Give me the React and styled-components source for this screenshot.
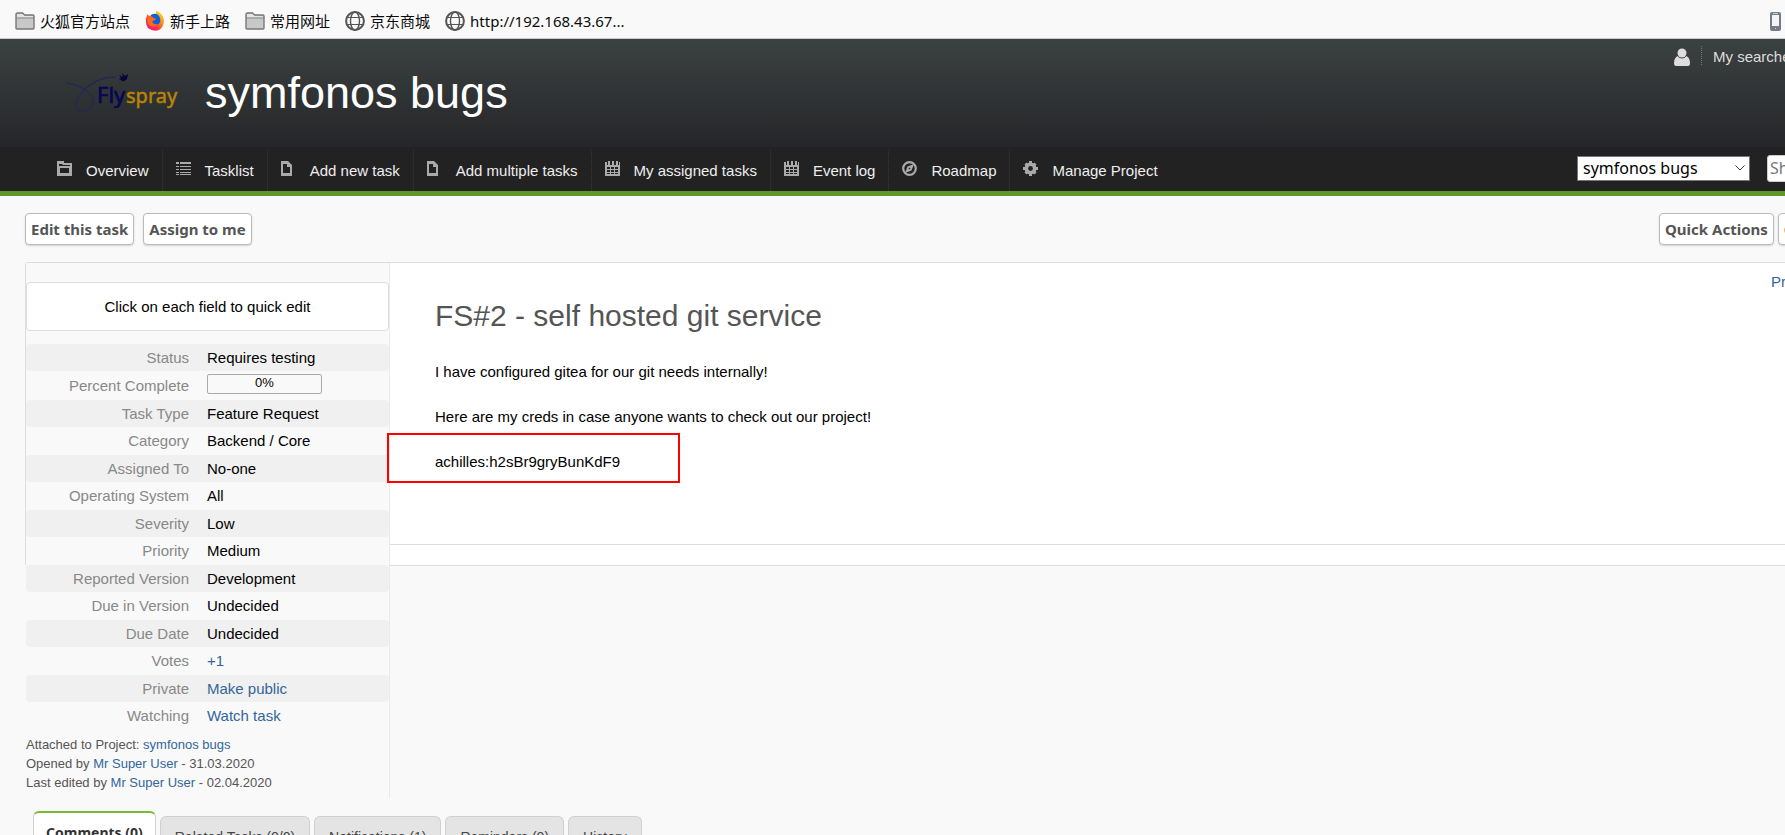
import React from "react";
import styled, { createGlobalStyle, css } from "styled-components";

const sans = `"Liberation Sans", Arial, sans-serif`;
const humanist = `"Noto Sans", "Noto Sans CJK SC", sans-serif`;

const GlobalStyle = createGlobalStyle`
  *, *::before, *::after { box-sizing: border-box; }
  html, body { margin: 0; background: #f9f9f9; overflow: hidden; }
  body { font: 15px/18px ${sans}; color: #000; }
  a { color: #369; text-decoration: none; }
`;

const Page = styled.div`
  height: 100vh;
  overflow: hidden;
`;

/* bookmarks */
const BookmarkBar = styled.nav`
  display: flex;
  align-items: center;
  gap: 15px;
  height: 39px;
  padding: 4px 4px 0 15px;
  background: #f9f9f9;
  border-bottom: 1px solid #ccc;
`;
const Bookmark = styled.a`
  display: flex;
  align-items: center;
  gap: 5px;
  color: #0c0c0d;
  font: 15px/20px ${humanist};
  white-space: nowrap;
`;
const DeviceButton = styled.button`
  display: flex;
  margin-left: auto;
  padding: 0;
  border: 0;
  background: none;
`;

/* header */
const Header = styled.header`
  display: flex;
  align-items: flex-start;
  height: 108px;
  padding-left: 64px;
  background: linear-gradient(#3c4141, #252629);
`;
const Brand = styled.a`
  display: flex;
  align-items: center;
  gap: 25px;
  padding-top: 28px;
`;
const SiteTitle = styled.h1`
  margin: 0;
  color: #fff;
  font: 45px/52px ${sans};
`;
const UserMenu = styled.div`
  display: flex;
  flex: none;
  width: 111px;
  margin-left: auto;
  padding-top: 7px;
  white-space: nowrap;
`;
const UserLink = styled.a`
  flex: none;
  height: 19px;
  line-height: 22px;
  color: #ddd;
  svg { display: block; margin-top: 2px; }
  ${(p) =>
    p.$divided &&
    css`
      margin-left: 11px;
      padding-left: 11px;
      border-left: 1px dotted #777;
    `}
`;

/* main menu */
const MenuBar = styled.nav`
  display: flex;
  height: 49px;
  padding-left: 44px;
  background: #222;
  border-bottom: 5px solid #5f9729;
`;
const MenuItem = styled.a`
  display: flex;
  gap: 14px;
  height: 41px;
  margin-top: 3px;
  padding: 11px 13px 0;
  border-right: 1px dotted #383838;
  color: #eee;
  line-height: 20px;
  white-space: nowrap;
  &:last-of-type { border-right: 0; }
`;
const MenuTools = styled.div`
  display: flex;
  flex: none;
  align-items: center;
  gap: 17px;
  width: 208px;
  margin-left: auto;
  padding-bottom: 2px;
`;
const SelectWrap = styled.div`
  display: grid;
  flex: none;
  width: 173px;
  align-items: center;
  & > * { grid-area: 1 / 1; }
  svg { justify-self: end; margin-right: 5px; pointer-events: none; }
`;
const ProjectSelect = styled.select`
  appearance: none;
  height: 25px;
  padding: 0 20px 0 5px;
  border: 1px solid #777;
  border-radius: 0;
  background: #fff;
  color: #000;
  font: 16px/20px ${humanist};
`;
const TaskInput = styled.input`
  flex: none;
  width: 90px;
  height: 27px;
  padding: 2px;
  border: 1px solid #ccc;
  border-radius: 3px;
  font: 16px/20px ${humanist};
  &::placeholder { color: #777; opacity: 1; }
`;

/* task actions */
const Content = styled.main`
  padding-left: 25px;
`;
const ActionBar = styled.div`
  display: flex;
  gap: 9px;
  padding: 17px 0;
`;
const ActionGroup = styled.div`
  display: flex;
  flex: none;
  gap: 4px;
  width: 126px;
  margin-left: auto;
`;
const ActionButton = styled.button`
  flex: none;
  height: 32px;
  padding: 0 5px;
  border: 1px solid #bbb;
  border-radius: 4px;
  background: #fff;
  box-shadow: 0 1px 2px rgba(0, 0, 0, 0.15);
  color: #555;
  font: bold 15px/20px ${humanist};
  white-space: nowrap;
`;

/* task panel */
const TaskPanel = styled.section`
  border: 1px solid #ddd;
  border-right: 0;
  border-radius: 3px 0 0 3px;
  background: #fff;
`;
const Sidebar = styled.aside`
  float: left;
  width: 364px;
  height: 535px;
  padding-top: 19px;
  border-right: 1px solid #eaeaea;
  background: #f9f9f9;
`;
const EditHint = styled.p`
  margin: 0 0 13px;
  padding: 15px 15px 14px;
  border: 1px solid #ddd;
  border-radius: 4px;
  background: #fff;
  text-align: center;
`;
const FieldTable = styled.table`
  width: 100%;
  border-spacing: 0;
`;
const FieldRow = styled.tr`
  height: 28px;
  &:nth-child(odd) { height: 27px; }
  &:nth-child(odd) > * { background: #f0f0f0; }
  th, td { padding: 0; }
  th {
    width: 181px;
    padding-right: 18px;
    border-radius: 4px 0 0 4px;
    color: #888;
    font-weight: normal;
    text-align: right;
  }
  td { border-radius: 0 4px 4px 0; }
`;
const ProgressBar = styled.div`
  width: 115px;
  height: 20px;
  margin: 3px 0 6px;
  border: 1px solid #aaa;
  border-radius: 2px;
  font-size: 13px;
  line-height: 16px;
  text-align: center;
`;
const TaskMeta = styled.div`
  padding-top: 5px;
  color: #555;
  font-size: 13px;
  line-height: 19px;
`;
const TaskBody = styled.article`
  margin-left: 364px;
  padding: 33px 45px 46px;
`;
const TaskTitle = styled.h2`
  margin: 0 0 27px;
  color: #555;
  font: 30px/40px ${sans};
`;
const Paragraph = styled.p`
  margin: 0 0 27px;
`;
const Marked = styled.span`
  position: relative;
  &::after {
    content: "";
    position: absolute;
    top: -20px;
    left: -48px;
    width: 293px;
    height: 50px;
    border: 2px solid #f00;
  }
`;
const TaskNav = styled.div`
  display: flex;
  width: 14px;
  float: right;
  padding-top: 10px;
  white-space: nowrap;
`;
const PanelFooter = styled.footer`
  height: 21px;
  margin-left: 364px;
  border-top: 1px solid #ddd;
`;

/* tabs */
const TabList = styled.div`
  clear: both;
  display: flex;
  align-items: flex-start;
  gap: 4px;
  padding: 13px 0 0 8px;
`;
const Tab = styled.button`
  height: 40px;
  margin-top: 5px;
  padding: 0 14px;
  border: 1px solid #d0d0d0;
  border-bottom: 0;
  border-radius: 6px 6px 0 0;
  background: #e4e4e4;
  color: #444;
  font: 14px/18px ${sans};
  ${(p) =>
    p.$active &&
    css`
      height: 45px;
      margin-top: 0;
      padding: 0 12px 4px;
      border-top: 2px solid #7b3;
      background: #fff;
      color: #333;
      font: bold 14px/20px ${humanist};
    `}
`;

/* icons */
const FolderIcon = () => (
  <svg width="20" height="18" viewBox="0 0 20 18">
    <path d="M1 16V2.500Q1 1 2.500 1h5l2 2H18q1 0 1 1v12q0 1-1 1H2q-1 0-1-1Z" fill="#c8c8c8" stroke="#777" strokeWidth="1.400" />
    <path d="M2 2h5.500l2 2H18v1.500H2Z" fill="#e4e4e4" />
    <path d="M1 6h18" stroke="#888" />
  </svg>
);
const GlobeIcon = () => (
  <svg width="20" height="20" viewBox="0 0 20 20" fill="none" stroke="#555">
    <circle cx="10" cy="10" r="8.900" strokeWidth="2" />
    <ellipse cx="10" cy="10" rx="4.500" ry="9" strokeWidth="1.400" />
    <path d="M2 6.500h16M2 13.500h16" strokeWidth="1.200" />
  </svg>
);
const FirefoxIcon = () => (
  <svg width="20" height="20" viewBox="0 0 20 20">
    <defs>
      <linearGradient id="fx" x1="1" y1="0" x2="0.200" y2="1">
        <stop offset="0" stopColor="#fff04a" />
        <stop offset=".4" stopColor="#ff980e" />
        <stop offset=".7" stopColor="#ff3647" />
        <stop offset="1" stopColor="#e31587" />
      </linearGradient>
    </defs>
    <path d="M2.500 3 4 5Q7 3 11 3V0Q18 2 19 9q0 7-5 10-6 2-11-2-4-6-.5-14Z" fill="url(#fx)" />
    <path d="M6 4q5-3 8 1 3 5-.5 8-4 3-7.500 0V9Z" fill="#0a60df" />
    <path d="M3 6q4-2 5.500 1l3 .8-2.500 1.700-2 1 1.500 2q2 1 4.500.5-3 4-8 2-4-4-2-9Z" fill="#ff6a16" />
  </svg>
);
const PhoneIcon = () => (
  <svg width="11" height="19" viewBox="0 0 11 19">
    <rect width="11" height="19" rx="2" fill="#737b85" />
    <path d="M2 3h7v11H2Z" fill="#f4f4f4" />
    <path d="M3 1.500h5M5 16.500h1" stroke="#ccd" />
  </svg>
);
const UserIcon = () => (
  <svg width="16" height="18" viewBox="0 0 16 18" fill="#ddd">
    <circle cx="8" cy="5" r="4.500" />
    <path d="M3.500 8q2 2.500 4.500 2.500T12.500 8Q16 10 16 15q0 3-2 3H2q-2 0-2-3 0-5 3.500-7Z" />
  </svg>
);
const ChevronIcon = () => (
  <svg width="10" height="6" viewBox="0 0 10 6" fill="none" stroke="#333">
    <path d="M.5.5 5 5 9.500.5" />
  </svg>
);
const Logo = () => (
  <svg width="116" height="50" viewBox="0 0 116 50" role="img" aria-label="Flyspray">
    <path
      d="M2 15C18 17 31 27 29 35C27 43 17 46 13 41C9 35 18 22 26 17C34 11 43 9 52 9"
      fill="none"
      stroke="#26284f"
      strokeWidth="1.500"
    />
    <path d="M55 7l4 2-1-4 3 3 3-2-1 5q-4 4-6 1l-2-1 2-1Z" fill="#04043e" />
    <text x="33" y="35" fontFamily="'Noto Sans', sans-serif" fontSize="22" fill="#060655" stroke="#060655" strokeWidth="0.600">Fly</text>
    <text x="62" y="35" fontFamily="'Noto Sans', sans-serif" fontSize="20" fill="#b98405" stroke="#b98405" strokeWidth="0.500">spray</text>
  </svg>
);
const menuShapes = {
  overview: <path d="M0 0h7v2h8v13H0Zm3 7v5h9V7Zm-1-3v1h11V4H6L5 3H2Z" fillRule="evenodd" />,
  list: <path d="M0 1h3v2H0Zm4 0h11v2H4ZM0 5h3v1H0Zm4 0h11v1H4ZM0 8h3v1H0Zm4 0h11v1H4ZM0 11h3v1H0Zm4 0h11v1H4ZM0 13h3v1H0Zm4 0h11v1H4Z" />,
  file: <path d="M0 0h7l4 4v11H0Zm2 3v9h7V6H6V3Z" fillRule="evenodd" />,
  calendar: (
    <path
      d="M0 1h2v3h1V0h2v4h2V0h2v4h2V0h2v4h1V1h1v14H0Zm2 5v2h3V6Zm4 0v2h3V6Zm4 0v2h3V6ZM2 9v2h3V9Zm4 0v2h3V9Zm4 0v2h3V9Zm-8 3v1h3v-1Zm4 0v1h3v-1Zm4 0v1h3v-1Z"
      fillRule="evenodd"
    />
  ),
  compass: (
    <g>
      <circle cx="7.500" cy="7.500" r="6.300" fill="none" stroke="#aaa" strokeWidth="2.200" />
      <path d="m12 3-2.500 6.500L3 12l2.500-6.500ZM7.500 6.500l-1 1 1 1 1-1Z" fillRule="evenodd" />
    </g>
  ),
  gear: (
    <g>
      <circle cx="7.500" cy="7.500" r="4.200" fill="none" stroke="#aaa" strokeWidth="3.600" />
      <path d="M7.500 0v15M0 7.500h15M2.500 2.500l10 10M12.500 2.500l-10 10" stroke="#aaa" strokeWidth="3" />
      <circle cx="7.500" cy="7.500" r="2.400" fill="#222" />
    </g>
  ),
};
const MenuIcon = ({ name }) => (
  <svg width="15" height="15" viewBox="0 0 15 15" fill="#aaa" aria-hidden="true">
    {menuShapes[name]}
  </svg>
);

const bookmarks = [
  [FolderIcon, "火狐官方站点"],
  [FirefoxIcon, "新手上路"],
  [FolderIcon, "常用网址"],
  [GlobeIcon, "京东商城"],
  [GlobeIcon, "http://192.168.43.67..."],
];
const menu = [
  ["overview", "Overview"],
  ["list", "Tasklist"],
  ["file", "Add new task"],
  ["file", "Add multiple tasks"],
  ["calendar", "My assigned tasks"],
  ["calendar", "Event log"],
  ["compass", "Roadmap"],
  ["gear", "Manage Project"],
];
const fields = [
  ["Status", "Requires testing"],
  ["Percent Complete", <ProgressBar role="progressbar" aria-label="Percent Complete" aria-valuenow={0}>0%</ProgressBar>],
  ["Task Type", "Feature Request"],
  ["Category", "Backend / Core"],
  ["Assigned To", "No-one"],
  ["Operating System", "All"],
  ["Severity", "Low"],
  ["Priority", "Medium"],
  ["Reported Version", "Development"],
  ["Due in Version", "Undecided"],
  ["Due Date", "Undecided"],
  ["Votes", <a href="#vote">+1</a>],
  ["Private", <a href="#public">Make public</a>],
  ["Watching", <a href="#watch">Watch task</a>],
];
const tabs = ["Comments (0)", "Related Tasks (0/0)", "Notifications (1)", "Reminders (0)", "History"];

export default function App() {
  return (
    <Page>
      <GlobalStyle />
      <BookmarkBar aria-label="Bookmarks">
        {bookmarks.map(([Icon, label]) => (
          <Bookmark href="#bookmark" key={label}>
            <Icon />
            {label}
          </Bookmark>
        ))}
        <DeviceButton aria-label="Mobile bookmarks">
          <PhoneIcon />
        </DeviceButton>
      </BookmarkBar>

      <Header>
        <Brand href="#home">
          <Logo />
          <SiteTitle>symfonos bugs</SiteTitle>
        </Brand>
        <UserMenu>
          <UserLink href="#profile" aria-label="Profile">
            <UserIcon />
          </UserLink>
          <UserLink href="#searches" $divided>My searches</UserLink>
        </UserMenu>
      </Header>

      <MenuBar aria-label="Project">
        {menu.map(([icon, label]) => (
          <MenuItem href="#menu" key={label}>
            <MenuIcon name={icon} />
            <span>{label}</span>
          </MenuItem>
        ))}
        <MenuTools>
          <SelectWrap>
            <ProjectSelect aria-label="Project">
              <option>symfonos bugs</option>
            </ProjectSelect>
            <ChevronIcon />
          </SelectWrap>
          <TaskInput aria-label="Show Task" placeholder="Show Task" />
        </MenuTools>
      </MenuBar>

      <Content>
        <ActionBar>
          <ActionButton>Edit this task</ActionButton>
          <ActionButton>Assign to me</ActionButton>
          <ActionGroup>
            <ActionButton>Quick Actions</ActionButton>
            <ActionButton>Close Task</ActionButton>
          </ActionGroup>
        </ActionBar>

        <TaskPanel>
          <Sidebar>
            <EditHint>Click on each field to quick edit</EditHint>
            <FieldTable>
              <tbody>
                {fields.map(([label, value]) => (
                  <FieldRow key={label}>
                    <th scope="row">{label}</th>
                    <td>{value}</td>
                  </FieldRow>
                ))}
              </tbody>
            </FieldTable>
            <TaskMeta>
              <div>Attached to Project: <a href="#project">symfonos bugs</a></div>
              <div>Opened by <a href="#user">Mr Super User</a> - 31.03.2020</div>
              <div>Last edited by <a href="#user">Mr Super User</a> - 02.04.2020</div>
            </TaskMeta>
          </Sidebar>
          <TaskNav>
            <a href="#previous">Previous Task</a>
          </TaskNav>
          <TaskBody>
            <TaskTitle>FS#2 - self hosted git service</TaskTitle>
            <Paragraph>I have configured gitea for our git needs internally!</Paragraph>
            <Paragraph>Here are my creds in case anyone wants to check out our project!</Paragraph>
            <Paragraph>
              <Marked>achilles:h2sBr9gryBunKdF9</Marked>
            </Paragraph>
          </TaskBody>
          <PanelFooter />
        </TaskPanel>

        <TabList role="tablist">
          {tabs.map((label, i) => (
            <Tab key={label} role="tab" aria-selected={i === 0} $active={i === 0}>{label}</Tab>
          ))}
        </TabList>
      </Content>
    </Page>
  );
}
